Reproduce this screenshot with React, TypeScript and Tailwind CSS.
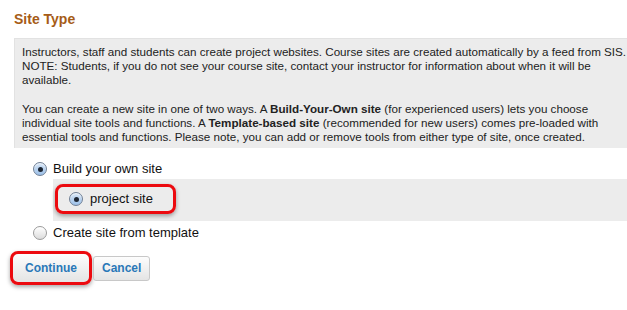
import React from 'react';

function Radio({ checked }: { checked: boolean }) {
  return (
    <span
      className={`inline-flex items-center justify-center w-[14px] h-[14px] rounded-full border shrink-0 ${
        checked
          ? 'border-[#6f7f95] bg-gradient-to-b from-[#d7e6f7] to-[#9cc0e8]'
          : 'border-[#9a9a9a] bg-gradient-to-b from-[#ffffff] to-[#dcdcdc]'
      } shadow-[inset_0_1px_1px_rgba(255,255,255,0.8)]`}
    >
      {checked && <span className="w-[5px] h-[5px] rounded-full bg-[#1d2633]" />}
    </span>
  );
}

export default function App() {
  return (
    <div className="w-[627px] h-[310px] bg-white overflow-hidden font-['Liberation_Sans',Arial,sans-serif] text-[#1a1a1a]">
      <h2 className="pl-[14px] pt-[11px] text-[14px] leading-[17px] font-bold text-[#a65c17]">Site Type</h2>

      <div className="ml-[14px] mt-[10px] bg-[#ececec] border-t border-l border-[#e2e2e2] pl-[7px] pt-[6px] pb-[4px] text-[11.65px] leading-[14px] text-[#222] whitespace-nowrap overflow-hidden">
        <p>
          Instructors, staff and students can create project websites. Course sites are created automatically by a feed from SIS.
          <br />
          NOTE: Students, if you do not see your course site, contact your instructor for information about when it will be
          <br />
          available.
        </p>
        <p className="mt-[15px]">
          You can create a new site in one of two ways. A <b>Build-Your-Own site</b> (for experienced users) lets you choose
          <br />
          individual site tools and functions. A <b>Template-based site</b> (recommended for new users) comes pre-loaded with
          <br />
          essential tools and functions. Please note, you can add or remove tools from either type of site, once created.
        </p>
      </div>

      <div className="mt-[11px] text-[13px] text-[#111]">
        <label className="flex items-center gap-[6px] pl-[33px] h-[20px]">
          <Radio checked />
          <span>Build your own site</span>
        </label>

        <div className="ml-[53px] h-[42px] bg-[#ececec] pt-[5px] pl-[2px]">
          <div className="w-[121px] h-[30px] border-[3px] border-[#ec0a0f] rounded-[8px] shadow-[0_2px_4px_rgba(0,0,0,0.35)] flex items-center gap-[7px] pl-[11px]">
            <Radio checked />
            <span>project site</span>
          </div>
        </div>

        <label className="flex items-center gap-[6px] pl-[33px] h-[24px]">
          <Radio checked={false} />
          <span>Create site from template</span>
        </label>
      </div>

      <div className="flex items-center ml-[10px] mt-[6px]">
        <div className="w-[82px] h-[34px] border-[3px] border-[#ec0a0f] rounded-[8px] shadow-[0_2px_4px_rgba(0,0,0,0.35)] bg-gradient-to-b from-[#fdfdfd] to-[#e4e4e4] flex items-center pl-[12px]">
          <span className="text-[12px] font-bold text-[#2a78b8]">Continue</span>
        </div>
        <button className="ml-px h-[25px] px-[8px] border border-[#c8c8c8] rounded-[3px] bg-gradient-to-b from-[#fdfdfd] to-[#e4e4e4] text-[12px] font-bold text-[#2a78b8]">
          Cancel
        </button>
      </div>
    </div>
  );
}
